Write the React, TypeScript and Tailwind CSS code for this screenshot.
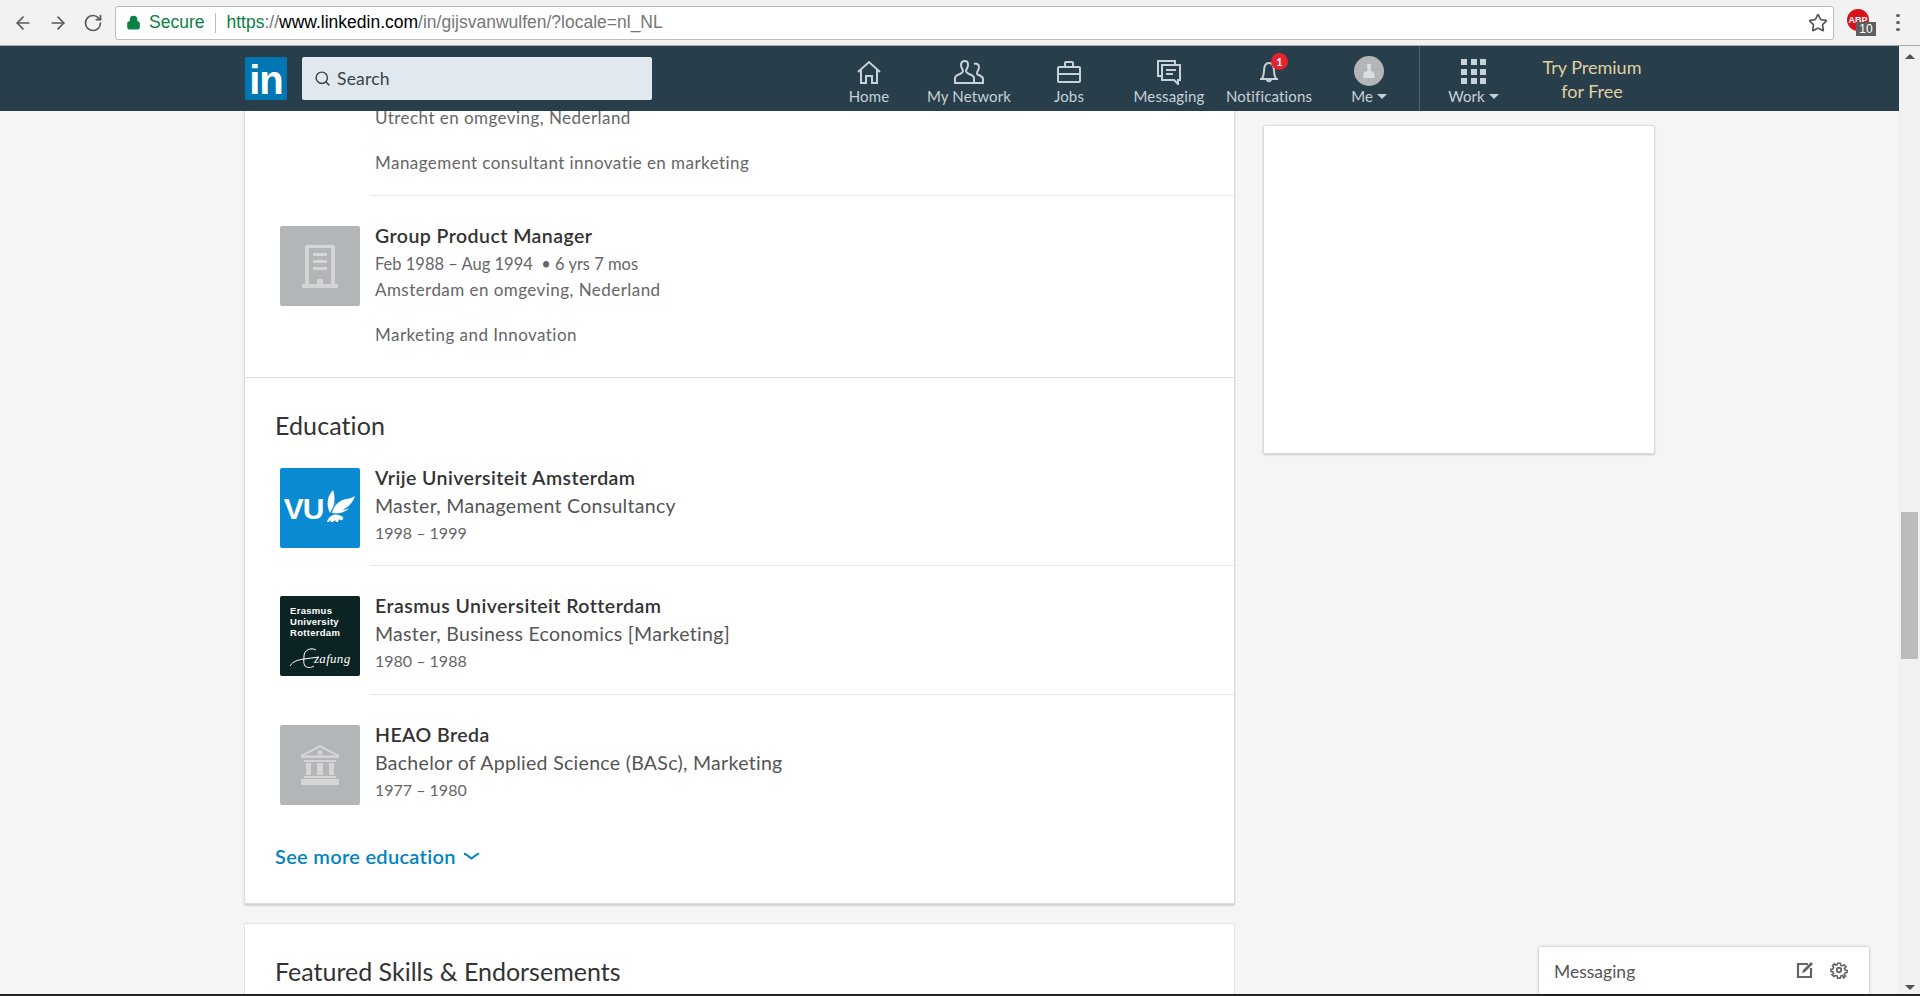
import { ArrowLeft, ArrowRight, Lock, RotateCw, Search, Star } from "lucide-react"

const bodyFont = "font-['Lato','Open_Sans',sans-serif]"

const navItems = [
  { label: "Home", icon: <HomeIcon /> },
  { label: "My Network", icon: <NetworkIcon /> },
  { label: "Jobs", icon: <JobsIcon /> },
  { label: "Messaging", icon: <MessagingIcon /> },
  { label: "Notifications", icon: <BellIcon /> },
]

function HomeIcon() {
  return (
    <svg width="26" height="24" viewBox="0 0 26 24" fill="none" stroke="currentColor" strokeWidth="2">
      <path d="M2 12 13 2l11 10" />
      <path d="M5 10v13h5v-7h6v7h5V10" />
    </svg>
  )
}

function NetworkIcon() {
  return (
    <svg width="30" height="24" viewBox="0 0 30 24" fill="none" stroke="currentColor" strokeWidth="2">
      <path d="M11 1c-3 0-4 2-4 4 0 3 2 4 2 6 0 1-1 2-3 3-3 1-5 2-5 4v5h19v-5c0-2-2-3-5-4-2-1-3-2-3-3 0-2 2-3 2-6 0-2-1-4-3-4z" />
      <path d="M20 4c2-1 5 0 5 3 0 3-2 4-2 6 0 1 1 2 2 2 2 1 4 2 4 4v4h-9" />
    </svg>
  )
}

function JobsIcon() {
  return (
    <svg width="26" height="24" viewBox="0 0 26 24" fill="none" stroke="currentColor" strokeWidth="2">
      <rect x="2" y="7" width="22" height="15" rx="1" />
      <path d="M9 7V3a1 1 0 0 1 1-1h6a1 1 0 0 1 1 1v4M2 14h22" />
    </svg>
  )
}

function MessagingIcon() {
  return (
    <svg width="26" height="26" viewBox="0 0 26 26" fill="none" stroke="currentColor" strokeWidth="2">
      <path d="M5 17H2V2h17v3" />
      <path d="M6 6h18v15h-2v4l-4-4H6z" />
      <path d="M10 11h10M10 15h7" />
    </svg>
  )
}

function BellIcon() {
  return (
    <svg width="24" height="24" viewBox="0 0 24 24" fill="none" stroke="currentColor" strokeWidth="2">
      <path d="M5 19c1-2 2-4 2-8 0-5 2-8 5-8s5 3 5 8c0 4 1 6 2 8z" />
      <path d="M3 19h18M10 19c0 3 4 3 4 0" />
    </svg>
  )
}

function CompanyIcon() {
  return (
    <svg width="36" height="44" viewBox="0 0 36 44" fill="#d3d5d7">
      <path fillRule="evenodd" d="M5 1h26a2 2 0 0 1 2 2v37h3v4H0v-4h3V3a2 2 0 0 1 2-2zm2 3v36h8v-5h6v5h8V4zm4 5h14v3H11zm0 7h14v3H11zm0 7h14v3H11z" />
    </svg>
  )
}

function SchoolIcon() {
  return (
    <svg width="40" height="42" viewBox="0 0 40 42" fill="none">
      <path fill="#d3d5d7" fillRule="evenodd" d="M20 1 39 11v3H1v-3zm0 2.500L4 11.500h32zM20 6a2.500 2.500 0 1 1 0 5 2.500 2.500 0 0 1 0-5z" />
      <path fill="#d3d5d7" d="M4 16h32v2H4zM6 19h5v12H6zM17 19h6v12h-6zM29 19h5v12h-5zM4 32h32v2H4zM1 35h38v6H1z" />
    </svg>
  )
}

function VuLogo() {
  return (
    <div className="w-[80px] h-[80px] rounded-[2px] bg-[#0a8ad2] flex items-center justify-center text-white shrink-0">
      <span className="font-['Liberation_Sans',sans-serif] font-bold text-[30px] leading-none -tracking-[1px] mt-[1px]">VU</span>
      <svg width="33" height="36" viewBox="0 0 33 36" fill="white" className="-mt-[2px]">
        <path d="M7 24C3 17 4 7 10 1c2 5 2 10 0 16 1-2 2-4 3-5z" />
        <path d="M9 24c1-7 8-13 14-14 3 0 7-2 9-3-2 7-8 12-13 14 3 0 5-1 7-2-3 4-9 6-17 5z" />
        <path d="M4 33c1-4 3-6 6-7 3-1 7 0 10 2 1 2-1 4-3 3l-1-1-1 3h-2l-1-2-2 2h-2l-1-2-1 2z" />
      </svg>
    </div>
  )
}

function ErasmusLogo() {
  return (
    <div className="w-[80px] h-[80px] rounded-[2px] bg-[#0c2324] text-white shrink-0 pt-[9px] pl-[10px]">
      <div className="font-['Liberation_Sans',sans-serif] font-bold text-[9.5px] leading-[11px] tracking-[0.3px]">
        Erasmus
        <br />
        University
        <br />
        Rotterdam
      </div>
      <div className="flex items-center mt-[9px] -ml-[1px]">
        <svg width="32" height="24" viewBox="0 0 32 24" fill="none" stroke="white" strokeWidth="1">
          <path d="M1 19c3-5 8-6 14-7 5-1 10-1 15-2M27 3c-5-3-12 0-12 6 0 4-1 7 1 10 2 2 6 2 9 0" />
        </svg>
        <span className="font-['Liberation_Serif',serif] italic text-[13px] leading-none -ml-[7px] -mt-[2px] tracking-[0.3px]">zafung</span>
      </div>
    </div>
  )
}

function PlaceholderLogo({ children }: { children: React.ReactNode }) {
  return (
    <div className="w-[80px] h-[80px] rounded-[2px] bg-[#b3b6b9] flex items-center justify-center shrink-0">
      {children}
    </div>
  )
}

function EducationRow({ logo, school, degree, years }: { logo: React.ReactNode; school: string; degree: string; years: string }) {
  return (
    <div className="flex ml-[35px] gap-[15px]">
      {logo}
      <div className="-mt-[3px]">
        <h3 className="text-[19.5px] leading-[26px] tracking-[0.45px] font-semibold text-[#333]">{school}</h3>
        <p className="text-[19.5px] leading-[28px] tracking-[0.3px] mt-[1px] text-[#555]">{degree}</p>
        <p className="text-[16px] leading-[26px] text-[#666]">{years}</p>
      </div>
    </div>
  )
}

function Divider() {
  return <div className="ml-[125px] h-px bg-[#e6e9ec]" />
}

export default function App() {
  return (
    <div className={`h-[996px] w-full overflow-hidden flex flex-col bg-[#f5f5f5] ${bodyFont}`}>
      {/* browser toolbar */}
      <div className="h-[46px] shrink-0 bg-[#f2f2f2] border-b border-[#a8a8a8] flex items-center font-['Liberation_Sans',sans-serif]">
        <div className="w-[115px] flex items-center pl-[13px] gap-[15px] text-[#5a5a5a]">
          <ArrowLeft size={20} strokeWidth={2} />
          <ArrowRight size={20} strokeWidth={2} />
          <RotateCw size={20} strokeWidth={2} />
        </div>
        <div className="w-[1719px] h-[34px] bg-white border border-[#bdbdbd] rounded-[3px] flex items-center pl-[10px] text-[17.5px]">
          <Lock size={15} className="text-[#0b8043] fill-[#0b8043] mr-[8px]" />
          <span className="text-[#0b8043]">Secure</span>
          <span className="w-px h-[20px] bg-[#bdbdbd] ml-[11px] mr-[10px]" />
          <span className="text-[#0b8043]">https</span>
          <span className="text-[#777]">://</span>
          <span className="text-black">www.linkedin.com</span>
          <span className="text-[#777]">/in/gijsvanwulfen/?locale=nl_NL</span>
          <Star size={20} strokeWidth={2} className="ml-auto mr-[5px] text-[#555]" />
        </div>
        <div className="relative w-[30px] h-[30px] ml-[13px]">
          <div className="w-[22px] h-[22px] rounded-full bg-[#d8121c] text-white text-[9px] font-bold leading-[22px] text-center mt-[1px]">ABP</div>
          <div className="absolute left-[9px] top-[14px] w-[20px] h-[14px] bg-[#5f5f5f] text-white text-[12px] leading-[14px] text-center">10</div>
        </div>
        <div className="flex flex-col gap-[3.500px] ml-[19px]">
          <span className="w-[3.500px] h-[3.500px] rounded-full bg-[#666]" />
          <span className="w-[3.500px] h-[3.500px] rounded-full bg-[#666]" />
          <span className="w-[3.500px] h-[3.500px] rounded-full bg-[#666]" />
        </div>
      </div>

      <div className="flex-1 flex min-h-0">
        <div className="flex-1 min-w-0 flex flex-col relative">
          {/* linkedin nav */}
          <nav className="h-[65px] shrink-0 bg-[#283e4a] flex pl-[245px] z-10">
            <div className="w-[42px] h-[43px] mt-[11px] rounded-[2px] bg-[#0077b5] text-white font-['Liberation_Sans',sans-serif] font-bold text-[40px] leading-[46px] text-center -tracking-[1px]">in</div>
            <div className="w-[350px] h-[43px] mt-[11px] ml-[15px] rounded-[2px] bg-[#e1e9ee] flex items-center pl-[12px] gap-[6px] text-[#33434d]">
              <Search size={17} strokeWidth={2} />
              <span className="text-[17.5px] tracking-[0.2px] mt-[1px]">Search</span>
            </div>
            <div className="flex ml-[167px]">
              {navItems.map((item) => (
                <div key={item.label} className="relative w-[100px] flex flex-col items-center text-[#c7d1d8]">
                  <div className="h-[26px] mt-[13px] flex items-center">{item.icon}</div>
                  <span className="text-[15px] leading-[20px] tracking-[0.15px] mt-[1px]">{item.label}</span>
                  {item.label === "Notifications" && (
                    <span className="absolute left-[52px] top-[7px] w-[17px] h-[17px] rounded-full bg-[#e6222f] text-white text-[11px] font-bold leading-[17px] text-center">1</span>
                  )}
                </div>
              ))}
              <div className="w-[100px] flex flex-col items-center text-[#c7d1d8]">
                <div className="w-[30px] h-[30px] mt-[10px] rounded-full bg-[#b3b6b9] flex items-center justify-center">
                  <svg width="14" height="16" viewBox="0 0 14 16" fill="#dcdddf">
                    <path d="M5 1h4l-.5 7c3 .5 4 2 4 3v4h-11v-4c0-1 1-2.500 4-3z" />
                  </svg>
                </div>
                <span className="text-[15px] leading-[20px] flex items-center gap-[4px]">
                  Me
                  <span className="border-x-[5px] border-x-transparent border-t-[5px] border-t-[#c7d1d8]" />
                </span>
              </div>
            </div>
            <div className="w-[108px] border-l border-[#52646f] flex flex-col items-center text-[#c7d1d8]">
              <div className="grid grid-cols-3 gap-[3.500px] mt-[13px]">
                {Array.from({ length: 9 }).map((_, i) => (
                  <span key={i} className="w-[6px] h-[6px] bg-[#c7d1d8]" />
                ))}
              </div>
              <span className="text-[15px] leading-[20px] mt-[2px] flex items-center gap-[4px]">
                Work
                <span className="border-x-[5px] border-x-transparent border-t-[5px] border-t-[#c7d1d8]" />
              </span>
            </div>
            <div className="w-[120px] ml-[5px] text-center text-[#e0d0a0] text-[18px] leading-[24px] pt-[9px]">
              Try Premium
              <br />
              for Free
            </div>
          </nav>

          {/* page body */}
          <main className="flex-1 min-h-0 overflow-hidden flex pl-[244px]">
            <div className="w-[991px] shrink-0 -mt-[6px]">
              <section className="bg-white border border-t-0 border-[#dcdcdc] rounded-b-[2px] shadow-[0_2px_2px_rgba(0,0,0,0.15)]">
                <div className="pl-[130px] text-[17px] leading-[26px] tracking-[0.45px] text-[#666]">
                  <p>Utrecht en omgeving, Nederland</p>
                  <p className="mt-[19px] pb-[19px]">Management consultant innovatie en marketing</p>
                </div>
                <Divider />
                <div className="flex ml-[35px] gap-[15px] pt-[30px] pb-[29px]">
                  <PlaceholderLogo><CompanyIcon /></PlaceholderLogo>
                  <div className="-mt-[3px] text-[17px] leading-[26px] tracking-[0.45px] text-[#666]">
                    <h3 className="text-[19.5px] tracking-[0.45px] font-semibold text-[#333]">Group Product Manager</h3>
                    <p className="mt-[2px] text-[16.5px] tracking-normal">Feb 1988 – Aug 1994 &nbsp;• 6 yrs 7 mos</p>
                    <p>Amsterdam en omgeving, Nederland</p>
                    <p className="mt-[19px]">Marketing and Innovation</p>
                  </div>
                </div>
                <div className="h-px bg-[#dcdfe2]" />
                <div className="pt-[32px] pb-[34px]">
                  <h2 className="pl-[30px] text-[25px] leading-[31px] tracking-[0.1px] text-[#333]">Education</h2>
                  <div className="mt-[27px] pb-[17px]">
                    <EducationRow logo={<VuLogo />} school="Vrije Universiteit Amsterdam" degree="Master, Management Consultancy" years="1998 – 1999" />
                  </div>
                  <Divider />
                  <div className="pt-[30px] pb-[18px]">
                    <EducationRow logo={<ErasmusLogo />} school="Erasmus Universiteit Rotterdam" degree="Master, Business Economics [Marketing]" years="1980 – 1988" />
                  </div>
                  <Divider />
                  <div className="pt-[30px]">
                    <EducationRow logo={<PlaceholderLogo><SchoolIcon /></PlaceholderLogo>} school="HEAO Breda" degree="Bachelor of Applied Science (BASc), Marketing" years="1977 – 1980" />
                  </div>
                  <div className="pl-[30px] mt-[38px] flex items-center gap-[7px] text-[#0084bf] text-[20px] leading-[26px] tracking-[0.3px] font-semibold">
                    See more education
                    <svg width="17" height="8" viewBox="0 0 17 8" fill="none" stroke="currentColor" strokeWidth="2">
                      <path d="M1 1.500c3 1 5 3 7.500 5 2.500-2 4.500-4 7.500-5" />
                    </svg>
                  </div>
                </div>
              </section>
              <section className="mt-[19px] h-[200px] bg-white border border-[#e3e3e3] rounded-[2px] pt-[31px] pl-[30px]">
                <h2 className="text-[25px] leading-[32px] text-[#333]">Featured Skills &amp; Endorsements</h2>
              </section>
            </div>
            <aside className="w-[392px] h-[329px] ml-[28px] mt-[14px] bg-white border border-[#dcdcdc] shadow-[0_1px_2px_rgba(0,0,0,0.2)] rounded-[2px] shrink-0" />
          </main>

          {/* messaging tab */}
          <div className="absolute right-[30px] bottom-0 w-[330px] h-[47px] bg-white rounded-t-[2px] shadow-[0_0_3px_rgba(0,0,0,0.3)] flex items-center pl-[15px] pr-[21px] pt-[3px] text-[#555] text-[17.5px]">
            <span className="flex-1">Messaging</span>
            <svg width="18" height="18" viewBox="0 0 18 18" fill="none" stroke="#666" strokeWidth="2.200" className="mr-[16px] -mt-[4px]">
              <path d="M12 3H2v13h13V7" />
              <path d="M6 12l1-3 8-8 2 2-8 8z" fill="#666" stroke="none" />
            </svg>
            <svg width="18" height="18" viewBox="0 0 24 24" fill="none" stroke="#666" strokeWidth="2.400" className="-mt-[4px]">
              <circle cx="12" cy="12" r="3" />
              <path d="M10 2h4l.6 3 2.400 1 2.600-1.700 2.800 2.800L20 9.700l1 2.300 3 .6v3l-3 .6-1 2.400 1.700 2.600-2.800 2.800L17.300 20l-2.700 1-.6 3h-4l-.6-3-2.400-1-2.600 1.700-2.800-2.800L4 17.300l-1-2.700-3-.6v-3l3-.6 1-2.400-1.700-2.600 2.800-2.800L6.700 5l2.700-1z" transform="translate(1.200 1.200) scale(0.9)" />
            </svg>
          </div>
        </div>

        {/* scrollbar */}
        <div className="w-[21px] shrink-0 bg-[#f1f1f1] flex flex-col items-center pt-[8px] pb-[4px]">
          <span className="border-x-[5px] border-x-transparent border-b-[5px] border-b-[#505050]" />
          <div className="w-[17px] h-[147px] mt-[453px] bg-[#bcbcbc]" />
          <span className="mt-auto border-x-[5px] border-x-transparent border-t-[5px] border-t-[#505050]" />
        </div>
      </div>
      <div className="h-[2px] shrink-0 bg-[#222]" />
    </div>
  )
}
